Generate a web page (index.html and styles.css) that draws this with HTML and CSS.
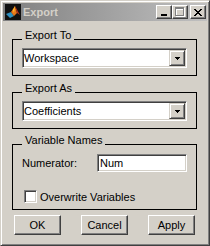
FILE: index.html
```html
<!DOCTYPE html>
<html lang="en">
<head>
    <meta charset="UTF-8">
    <title>Export</title>
    <link rel="stylesheet" href="styles.css">
</head>
<body>
<div class="window">
    <div class="titlebar">
        <svg class="appIcon" width="16" height="16" viewBox="0 0 16 16">
            <rect width="16" height="16" fill="#101010"/>
            <polygon points="1,10 6,8 9,12 5,14" fill="#2f8fbf"/>
            <polygon points="6,8 10,2 12,9 9,12" fill="#e8771a"/>
            <polygon points="10,2 15,11 12,9" fill="#b3301c"/>
            <polygon points="8,6 10,2 9,9" fill="#ffcc33"/>
        </svg>
        <span class="title">Export</span>
        <div class="captionButtons">
            <div class="capBtn">
                <svg width="8" height="7" viewBox="0 0 8 7" shape-rendering="crispEdges"><rect x="1" y="5" width="6" height="2" fill="#000"/></svg>
            </div>
            <div class="capBtn">
                <svg width="10" height="10" viewBox="0 0 10 10" shape-rendering="crispEdges">
                    <path d="M1 1h9v9H1z M2 3v6h7V3z" fill="#fff" fill-rule="evenodd"/>
                    <path d="M0 0h9v9H0z M1 2v6h7V2z" fill="#808080" fill-rule="evenodd"/>
                </svg>
            </div>
            <div class="capBtn capClose">
                <svg width="8" height="7" viewBox="0 0 8 7" shape-rendering="crispEdges">
                    <path d="M0 0h2v1H0z M6 0h2v1H6z M1 1h2v1H1z M5 1h2v1H5z M2 2h4v1H2z M3 3h2v1H3z M2 4h4v1H2z M1 5h2v1H1z M5 5h2v1H5z M0 6h2v1H0z M6 6h2v1H6z" fill="#000"/>
                </svg>
            </div>
        </div>
    </div>

    <div class="content">
        <div class="group groupFirst">
            <span class="groupLabel">Export To</span>
            <div class="popup">
                <span>Workspace</span>
                <span class="popupArrow">
                    <svg width="5" height="3" viewBox="0 0 5 3" shape-rendering="crispEdges"><path d="M0 0h5v1H0z M1 1h3v1H1z M2 2h1v1H2z" fill="#000"/></svg>
                </span>
            </div>
        </div>

        <div class="group">
            <span class="groupLabel">Export As</span>
            <div class="popup">
                <span>Coefficients</span>
                <span class="popupArrow">
                    <svg width="5" height="3" viewBox="0 0 5 3" shape-rendering="crispEdges"><path d="M0 0h5v1H0z M1 1h3v1H1z M2 2h1v1H2z" fill="#000"/></svg>
                </span>
            </div>
        </div>

        <div class="group groupNames">
            <span class="groupLabel">Variable Names</span>
            <div class="fieldRow">
                <label for="numerator">Numerator:</label>
                <input type="text" id="numerator" class="editBox" value="Num">
            </div>
            <div class="checkRow">
                <span class="checkBox"></span>
                <span>Overwrite Variables</span>
            </div>
        </div>

        <div class="actions">
            <button class="btn">OK</button>
            <button class="btn">Cancel</button>
            <button class="btn">Apply</button>
        </div>
    </div>
</div>
</body>
</html>
```

FILE: styles.css
```css
body{
    margin: 0;
    font-family: "Liberation Sans", Arial, sans-serif;
    font-size: 11px;
    color: #000;
}
.window{
    width: 210px;
    height: 246px;
    box-sizing: border-box;
    background-color: #d4d0c8;
    border: 1px solid;
    border-color: #d4d0c8 #404040 #404040 #d4d0c8;
    box-shadow: inset 1px 1px #fff, inset -1px -1px #808080;
    padding: 2px;
}
.titlebar{
    height: 18px;
    display: flex;
    align-items: center;
    background: linear-gradient(to right, #808080, #c0c0c0);
    padding: 0 1px 0 2px;
}
.appIcon{
    margin-right: 2px;
}
.title{
    flex: 1;
    font-weight: bold;
    color: #d4d0c8;
}
.captionButtons{
    display: flex;
}
.capBtn{
    width: 16px;
    height: 14px;
    box-sizing: border-box;
    background-color: #d4d0c8;
    border: 1px solid;
    border-color: #fff #404040 #404040 #fff;
    box-shadow: inset -1px -1px #808080;
    display: flex;
    align-items: center;
    justify-content: center;
}
.capClose{
    margin-left: 2px;
}
.content{
    padding: 0 10px 0 9px;
}
.group{
    border: 1px solid #000;
    margin-top: 16px;
    padding: 0 9px 7px;
}
.groupFirst{
    margin-top: 18px;
}
.groupNames{
    margin-top: 15px;
    padding-bottom: 6px;
}
.groupLabel{
    display: block;
    width: fit-content;
    margin-top: -11px;
    padding: 0 3px;
    line-height: 13px;
    background-color: #d4d0c8;
}
.popup{
    margin-top: 6px;
    height: 20px;
    box-sizing: border-box;
    display: flex;
    align-items: center;
    background-color: #fff;
    border: 1px solid;
    border-color: #808080 #fff #fff #808080;
    box-shadow: inset 1px 1px #404040, inset -1px -1px #d4d0c8;
    padding: 1px;
}
.popupArrow{
    margin-left: auto;
    width: 16px;
    height: 16px;
    box-sizing: border-box;
    background-color: #d4d0c8;
    border: 1px solid;
    border-color: #d4d0c8 #404040 #404040 #d4d0c8;
    box-shadow: inset 1px 1px #fff, inset -1px -1px #808080;
    display: flex;
    align-items: center;
    justify-content: center;
}
.fieldRow{
    margin-top: 7px;
    display: flex;
    align-items: center;
}
.fieldRow label{
    width: 75px;
}
.editBox{
    flex: 1;
    min-width: 0;
    height: 18px;
    box-sizing: border-box;
    margin: 0;
    font-family: inherit;
    font-size: 11px;
    background-color: #fff;
    border: 1px solid;
    border-color: #808080 #fff #fff #808080;
    box-shadow: inset 1px 1px #404040, inset -1px -1px #d4d0c8;
    padding: 0 0 0 2px;
    outline: none;
}
.checkRow{
    margin-top: 18px;
    display: flex;
    align-items: center;
    gap: 3px;
    padding-left: 2px;
}
.checkBox{
    width: 13px;
    height: 13px;
    box-sizing: border-box;
    background-color: #fff;
    border: 1px solid;
    border-color: #808080 #fff #fff #808080;
    box-shadow: inset 1px 1px #404040, inset -1px -1px #d4d0c8;
}
.actions{
    margin-top: 5px;
    display: flex;
    gap: 20px;
    padding-left: 2px;
}
.btn{
    width: 47px;
    height: 20px;
    box-sizing: border-box;
    margin: 0;
    font-family: inherit;
    font-size: 11px;
    color: #000;
    background-color: #d4d0c8;
    border: 1px solid;
    border-color: #fff #404040 #404040 #fff;
    box-shadow: inset -1px -1px #808080;
    padding: 0;
}
```
